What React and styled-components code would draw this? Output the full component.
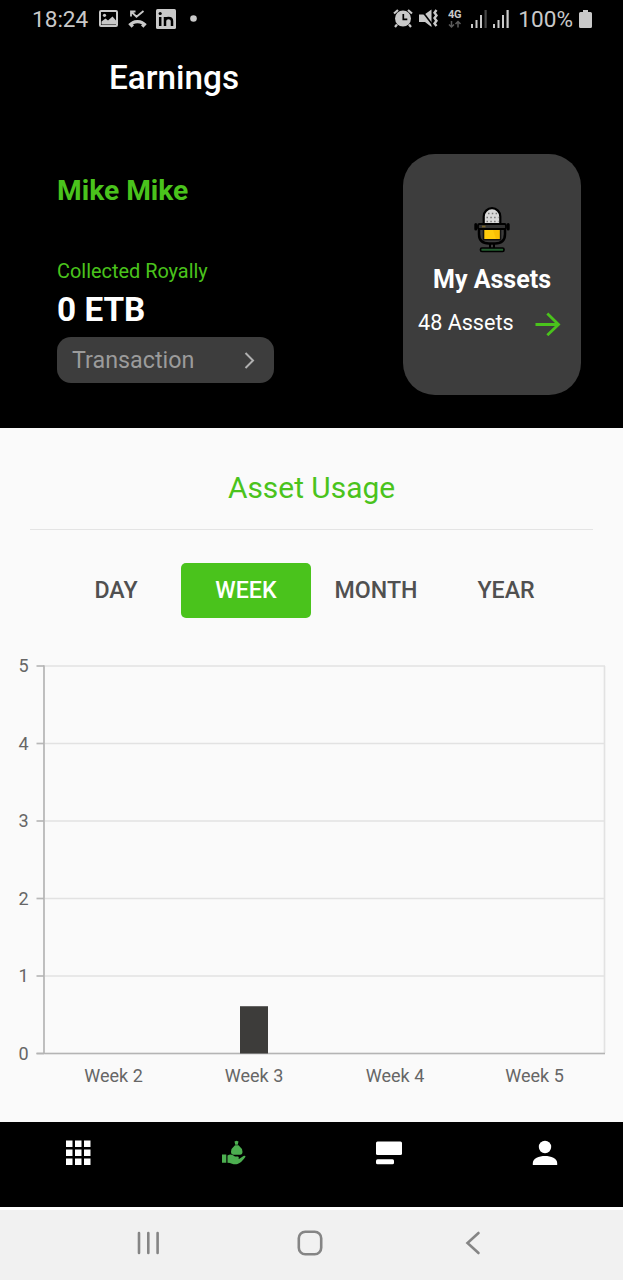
import React from "react";
import styled, { createGlobalStyle } from "styled-components";

const Global = createGlobalStyle`
  * { box-sizing: border-box; }
  body { margin: 0; background: #fafafa; font-family: Roboto, "Liberation Sans", sans-serif; }
  svg { display: block; flex: none; }
  button { font-family: inherit; border: 0; padding: 0; background: none; }
`;

const Screen = styled.div`
  width: 623px;
  height: 1280px;
  display: flex;
  flex-direction: column;
  overflow: hidden;
  background: #fafafa;
`;

const Header = styled.header`
  height: 428px;
  background: #000;
  color: #fff;
`;

const StatusBar = styled.div`
  height: 37px;
  padding: 0 31px 0 32px;
  display: flex;
  align-items: center;
  justify-content: space-between;
  color: #c9c9c9;
`;

const StatusGroup = styled.div`
  display: flex;
  align-items: center;
`;

const StatusText = styled.span`
  margin-left: ${(p) => p.$gap || 0}px;
  font-size: 22.6px;
  line-height: 37px;
  padding-top: 1px;
`;

const StatusIcon = styled.svg`
  margin-left: ${(p) => p.$gap}px;
`;

const TitleBar = styled.div`
  height: 82px;
  padding: 0 0 2px 109px;
  display: flex;
  align-items: center;
`;

const Title = styled.h1`
  margin: 0;
  font-size: 33.3px;
  font-weight: 500;
`;

const Summary = styled.div`
  display: flex;
  justify-content: space-between;
  padding: 35px 42px 0 57px;
`;

const Account = styled.div`
  display: flex;
  flex-direction: column;
  padding-top: 20px;
`;

const Name = styled.div`
  font-size: 28.2px;
  line-height: 34px;
  font-weight: 700;
  color: #4ac31c;
`;

const Caption = styled.div`
  margin-top: 52px;
  font-size: 19.9px;
  line-height: 24px;
  color: #4ac31c;
`;

const Amount = styled.div`
  margin-top: 8px;
  font-size: 33.3px;
  line-height: 36px;
  font-weight: 700;
`;

const TransactionButton = styled.button`
  margin-top: 9px;
  width: 217px;
  height: 46px;
  padding: 0 17px 1px 15px;
  border-radius: 14px;
  background: #3d3d3d;
  color: #9b9b9b;
  font-size: 23.3px;
  display: flex;
  align-items: center;
  justify-content: space-between;
`;

const AssetsCard = styled.div`
  width: 178px;
  height: 241px;
  padding-top: 52px;
  border-radius: 32px;
  background: #3d3d3d;
  display: flex;
  flex-direction: column;
  align-items: center;
`;

const CardTitle = styled.div`
  margin-top: 12px;
  font-size: 25px;
  line-height: 30px;
  font-weight: 700;
`;

const CardRow = styled.div`
  align-self: stretch;
  margin-top: 13px;
  padding: 0 20px 0 15px;
  display: flex;
  align-items: center;
  justify-content: space-between;
  font-size: 21.6px;
  line-height: 30px;
`;

const Usage = styled.main`
  height: 694px;
  display: flex;
  flex-direction: column;
`;

const UsageTitle = styled.h2`
  margin: 0 30px;
  height: 102px;
  padding-top: 43px;
  border-bottom: 1px solid #e4e4e4;
  font-size: 29.9px;
  line-height: 34px;
  font-weight: 400;
  text-align: center;
  color: #4ac31c;
`;

const Tabs = styled.div`
  margin: 33px 0 0 51px;
  display: flex;
`;

const Tab = styled.button`
  width: 130px;
  height: 55px;
  padding-bottom: 1px;
  border-radius: 5px;
  font-size: 23.2px;
  font-weight: 500;
  color: ${(p) => (p.$active ? "#fff" : "#505050")};
  background: ${(p) => (p.$active ? "#4ac31c" : "transparent")};
`;

const Chart = styled.svg`
  margin-top: 22px;
  font-size: 18px;
  fill: #666;
`;

const NavBar = styled.nav`
  height: 85px;
  background: #000;
  display: grid;
  grid-template-columns: repeat(4, 1fr);
  justify-items: center;
  padding-top: 17px;
`;

const NavItem = styled.button`
  width: 28px;
  height: 28px;
  color: ${(p) => (p.$active ? "#4caf50" : "#fff")};
`;

const SystemBar = styled.div`
  height: 73px;
  border-top: 3px solid #fff;
  background: #f1f1f1;
  display: flex;
  align-items: center;
  padding: 0 0 4px 137px;
`;

const SystemIcon = styled.svg`
  margin-left: ${(p) => p.$gap}px;
  fill: none;
  stroke: #858585;
  stroke-width: 2.6;
  stroke-linecap: round;
`;

const WEEKS = [
  { label: "Week 2", x: 113.5, value: 0 },
  { label: "Week 3", x: 254, value: 0.61 },
  { label: "Week 4", x: 395, value: 0 },
  { label: "Week 5", x: 534.5, value: 0 },
];

const BASE = 413.5;
const STEP = 77.5;

function UsageChart() {
  return (
    <Chart width="623" height="460" viewBox="0 0 623 460">
      {[0, 1, 2, 3, 4, 5].map((n) => {
        const y = BASE - n * STEP;
        return (
          <g key={n}>
            <path d={`M45 ${y}H605`} stroke="#e2e2e2" strokeWidth="1.7" />
            <path d={`M36.5 ${y}H44`} stroke="#b8b8b8" strokeWidth="1.7" />
            <text x="28.5" y={y + 6.3} textAnchor="end">{n}</text>
          </g>
        );
      })}
      <path d="M604.5 26V413" stroke="#e2e2e2" strokeWidth="1.7" />
      <path d="M44 25.2V413.5M36.5 413.5H605" stroke="#b4b4b4" strokeWidth="1.7" fill="none" />
      {WEEKS.map((w) => (
        <g key={w.label}>
          {w.value > 0 && (
            <rect x={w.x - 14} y={BASE - w.value * STEP} width="28" height={w.value * STEP} fill="#3d3c3a" />
          )}
          <text x={w.x} y="442" textAnchor="middle">{w.label}</text>
        </g>
      ))}
    </Chart>
  );
}

function MicIcon() {
  return (
    <svg width="36" height="47" viewBox="0 0 36 47">
      <path d="M9.700 20V10.500a8.300 8.300 0 0 1 16.600 0V20Z" fill="#d9d9d9" stroke="#000" strokeWidth="2.200" />
      <path d="M14 7.500h9M12.500 11.500h12M12.500 15.500h12" stroke="#777" strokeWidth="1.300" strokeDasharray="1.500 2.300" />
      <path d="M5 22v6q0 9.500 10 9.500h6q10 0 10-9.500v-6" fill="#3d3d3d" stroke="#000" strokeWidth="2.500" />
      <path d="M9.500 23v10.700h17V23Z" fill="#ffcc0c" stroke="#111" strokeWidth="1.600" />
      <path d="M19 24h6.700v9H22Z" fill="#f5b700" opacity=".6" />
      <rect x="4" y="18" width="28" height="5" rx="1.500" fill="#333" stroke="#000" strokeWidth="1.800" />
      <path d="M8 20.500h3.500" stroke="#77642b" strokeWidth="1.800" />
      <path d="M1.800 18.500v4.500M34.200 18.500v4.500" stroke="#000" strokeWidth="3" strokeLinecap="round" />
      <path d="M16 38v4M20 38v4" stroke="#000" strokeWidth="2" />
      <rect x="6.500" y="42" width="23.500" height="3.500" rx="1.400" fill="#245f30" stroke="#000" strokeWidth="1.700" />
    </svg>
  );
}

function SignalIcon({ gap, weak }) {
  return (
    <StatusIcon $gap={gap} width="17" height="18" viewBox="0 0 17 18" fill="currentColor">
      <rect x="0" y="14" width="2" height="4" />
      <rect x="4.500" y="10" width="2" height="8" />
      <rect x="9" y="5" width="2" height="13" />
      <rect x="13.500" y="0" width="2.200" height="18" opacity={weak ? 0.35 : 1} />
    </StatusIcon>
  );
}

export default function App() {
  return (
    <Screen>
      <Global />
      <Header>
        <StatusBar>
          <StatusGroup>
            <StatusText>18:24</StatusText>
            <StatusIcon $gap={11} width="19" height="17" viewBox="0 0 19 17">
              <rect x="1" y="1" width="17" height="15" rx="1" fill="none" stroke="currentColor" strokeWidth="2" />
              <path d="M2.500 14.500v-3l4-3 2.500 2 4.500-4 3.500 4v4Z" fill="currentColor" />
              <circle cx="5.500" cy="5.300" r="1.600" fill="currentColor" />
            </StatusIcon>
            <StatusIcon $gap={10} width="19" height="18" viewBox="0 0 19 18">
              <path d="M3 6.500V1.500h4.500M3 1.500l5.500 5.200L15.500 1" fill="none" stroke="currentColor" strokeWidth="1.800" />
              <path d="M2 15.500C5 10.300 14 10.300 17 15.500" fill="none" stroke="currentColor" strokeWidth="3.300" />
              <path d="M.3 14 3 12.500 6 15.500 3.500 17.800ZM18.700 14 16 12.500 13 15.500l2.500 2.300Z" fill="currentColor" />
            </StatusIcon>
            <StatusIcon $gap={9} width="20" height="20" viewBox="0 0 20 20">
              <rect width="20" height="20" rx="1.500" fill="currentColor" />
              <path d="M4.200 8v9M9 8v9M9 12q0-3 3.500-3t3.500 3v5" fill="none" stroke="#000" strokeWidth="2.500" />
              <circle cx="4.200" cy="4.500" r="1.600" fill="#000" />
            </StatusIcon>
            <StatusIcon $gap={14} width="7" height="7" viewBox="0 0 7 7">
              <circle cx="3.500" cy="3.500" r="3.300" fill="currentColor" />
            </StatusIcon>
          </StatusGroup>
          <StatusGroup>
            <StatusIcon $gap={0} width="20" height="19" viewBox="0 0 20 19">
              <circle cx="10" cy="9.500" r="8" fill="currentColor" />
              <path d="M1 4.500 5 1M19 4.500 15 1M4 15.500 2 18M16 15.500l2 2.500" stroke="currentColor" strokeWidth="2.200" />
              <path d="M10.300 5v5.300h4" fill="none" stroke="#000" strokeWidth="1.700" />
            </StatusIcon>
            <StatusIcon $gap={6} width="20" height="19" viewBox="0 0 20 19">
              <path d="M0 5.500h5.500L12.500.5v17.500L6 13H0Z" fill="currentColor" />
              <path d="M1.500 0 14.500 17" stroke="#000" strokeWidth="1.600" />
              <path d="M17.500 1l-2 2.700 2 2.700-2 2.700 2 2.700-2 2.700 2 2.500" fill="none" stroke="currentColor" strokeWidth="2.400" />
            </StatusIcon>
            <StatusIcon $gap={9} width="14" height="20" viewBox="0 0 14 20">
              <text x="0" y="8.800" fontSize="11" fontWeight="700" fill="currentColor" textLength="13.500">4G</text>
              <path d="M3.500 12v6M1 15.500l2.500 2.500L6 15.500M10 18.500v-6M7.500 15l2.500-2.500 2.500 2.500" fill="none" stroke="#5b5b5b" strokeWidth="1.500" />
            </StatusIcon>
            <SignalIcon gap={9} weak />
            <SignalIcon gap={5} />
            <StatusText $gap={8}>100%</StatusText>
            <StatusIcon $gap={6} width="13" height="18" viewBox="0 0 13 18" fill="currentColor">
              <path d="M4 0h5v2h2.500Q13 2 13 3.500v13Q13 18 11.500 18h-10Q0 18 0 16.500v-13Q0 2 1.500 2H4Z" />
            </StatusIcon>
          </StatusGroup>
        </StatusBar>
        <TitleBar>
          <Title>Earnings</Title>
        </TitleBar>
        <Summary>
          <Account>
            <Name>Mike Mike</Name>
            <Caption>Collected Royally</Caption>
            <Amount>0 ETB</Amount>
            <TransactionButton>
              Transaction
              <svg width="14" height="18" viewBox="0 0 14 18">
                <path d="M2.500 2 10 9.500 2.500 17" fill="none" stroke="#b0b0b0" strokeWidth="2" />
              </svg>
            </TransactionButton>
          </Account>
          <AssetsCard>
            <MicIcon />
            <CardTitle>My Assets</CardTitle>
            <CardRow>
              48 Assets
              <svg width="26" height="26" viewBox="0 0 26 26">
                <path d="M.5 14.500h23M12.300 3.500 23.500 14.500 12.300 25.200" fill="none" stroke="#4ac31c" strokeWidth="2.800" />
              </svg>
            </CardRow>
          </AssetsCard>
        </Summary>
      </Header>
      <Usage>
        <UsageTitle>Asset Usage</UsageTitle>
        <Tabs>
          <Tab>DAY</Tab>
          <Tab $active>WEEK</Tab>
          <Tab>MONTH</Tab>
          <Tab>YEAR</Tab>
        </Tabs>
        <UsageChart />
      </Usage>
      <NavBar>
        <NavItem>
          <svg width="28" height="28" viewBox="0 0 28 28" fill="currentColor">
            {[2, 11, 20].map((y) => [2, 11, 20].map((x) => <rect key={`${x}-${y}`} x={x} y={y - 0.5} width="6.500" height="6.500" />))}
          </svg>
        </NavItem>
        <NavItem $active>
          <svg width="28" height="28" viewBox="0 0 28 28" fill="currentColor">
            <path d="M14.500 2.500l2-.8 2 .8-.7 3.200h-2.600ZM15 6.200h3.500l.7.800q3.300 2.500 3.300 5.700 0 3-2.500 3h-6.500q-2.500 0-2.500-3 0-3.200 3.300-5.700Z" />
            <path d="M2 15.500h4.300v8.300H2ZM7.500 16.500q3-1.700 5.500-.2l2 1.200h3q1.500.6.500 1.700L19 20l4.500-3q1.800-.7 2 .8-4 6-8 7.200-2.500.8-5.500-.2-2-1-4.500-1Z" />
          </svg>
        </NavItem>
        <NavItem>
          <svg width="28" height="28" viewBox="0 0 28 28" fill="currentColor">
            <rect x="1" y="2.500" width="26" height="13.500" rx="1.500" />
            <rect x="1" y="20.300" width="18" height="5" rx="1.500" />
          </svg>
        </NavItem>
        <NavItem>
          <svg width="28" height="28" viewBox="0 0 28 28" fill="currentColor">
            <circle cx="14" cy="8" r="6.200" />
            <path d="M1.800 26v-2C1.800 19.500 8 17 14 17s12.200 2.500 12.200 7v2Z" />
          </svg>
        </NavItem>
      </NavBar>
      <SystemBar>
        <SystemIcon $gap={0} width="23" height="24" viewBox="0 0 23 24">
          <path d="M2 2v20M11.300 2v20M20.600 2v20" />
        </SystemIcon>
        <SystemIcon $gap={137} width="26" height="26" viewBox="0 0 26 26">
          <rect x="1.800" y="1.800" width="22.400" height="22.400" rx="6.500" />
        </SystemIcon>
        <SystemIcon $gap={142} width="16" height="24" viewBox="0 0 16 24">
          <path d="M13.500 2 2.500 12 13.500 22" />
        </SystemIcon>
      </SystemBar>
    </Screen>
  );
}
